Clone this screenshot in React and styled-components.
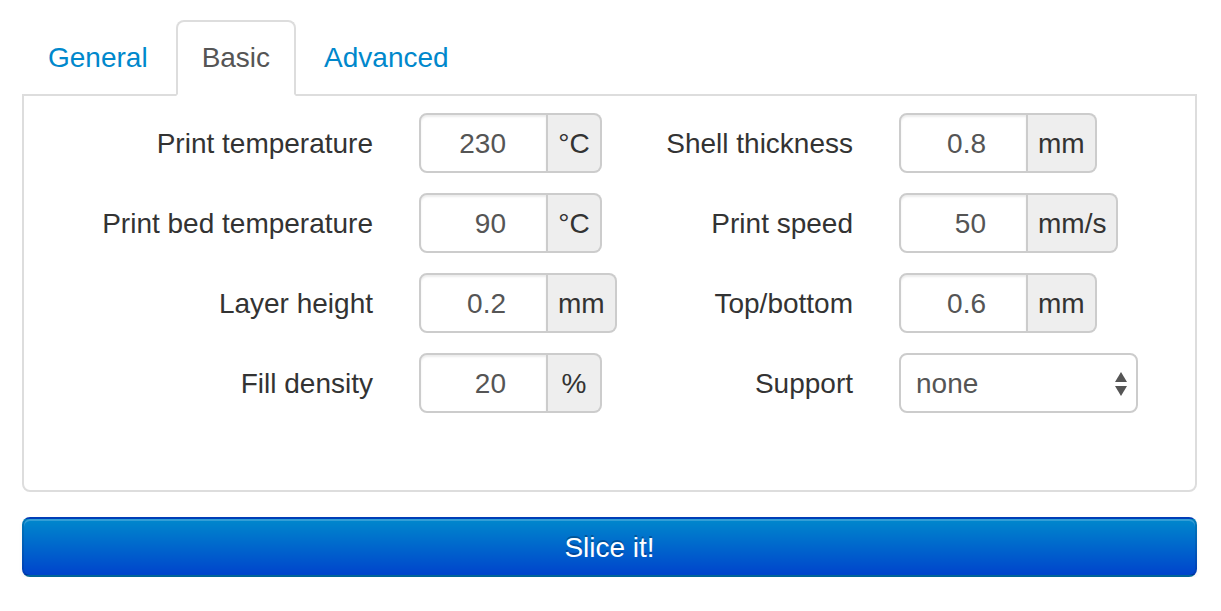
import React from 'react';
import styled, { createGlobalStyle } from 'styled-components';

const GlobalStyle = createGlobalStyle`
  html, body {
    margin: 0;
    padding: 0;
    background: #fff;
  }
  body {
    font-family: "Liberation Sans", Arial, Helvetica, sans-serif;
    font-size: 28px;
    line-height: 40px;
    color: #333;
  }
`;

const Page = styled.div`
  width: 1175px;
  padding: 20px 0 0 22px;
`;

const Tabs = styled.ul`
  display: flex;
  list-style: none;
  margin: 0;
  padding: 0;
  position: relative;
  z-index: 1;
`;

const Tab = styled.li`
  margin-right: 2px;
  margin-bottom: -2px;
  a {
    display: block;
    padding: 16px 24px;
    border: 2px solid ${(p) => (p.$active ? '#ddd' : 'transparent')};
    border-bottom-color: ${(p) => (p.$active ? '#fff' : 'transparent')};
    border-radius: 8px 8px 0 0;
    background: ${(p) => (p.$active ? '#fff' : 'transparent')};
    color: ${(p) => (p.$active ? '#555' : '#0088cc')};
    text-decoration: none;
    line-height: 40px;
  }
`;

const Panel = styled.div`
  border: 2px solid #ddd;
  border-radius: 0 0 8px 8px;
  padding: 17px 0 77px 29px;
`;

const Form = styled.div`
  display: grid;
  grid-template-columns: 480px 480px;
  row-gap: 20px;
`;

const Field = styled.div`
  display: flex;
  align-items: center;
  white-space: nowrap;
`;

const Label = styled.label`
  flex: 0 0 320px;
  text-align: right;
  color: #333;
  margin-right: 46px;
  padding-top: 2px;
`;

const Group = styled.div`
  display: flex;
  flex-shrink: 0;
  height: 60px;
`;

const NumberInput = styled.div`
  width: 85px;
  padding: 2px 40px 0 0;
  height: 54px;
  border: 2px solid #ccc;
  border-radius: 8px 0 0 8px;
  text-align: right;
  color: #555;
  line-height: 54px;
  box-shadow: inset 0 2px 2px rgba(0, 0, 0, 0.075);
`;

const Addon = styled.span`
  height: 54px;
  line-height: 54px;
  padding: 2px 10px 0;
  min-width: 32px;
  text-align: center;
  background: #eee;
  border: 2px solid #ccc;
  border-left: none;
  border-radius: 0 8px 8px 0;
  color: #333;
`;

const Select = styled.div`
  box-sizing: border-box;
  flex-shrink: 0;
  width: 239px;
  height: 60px;
  border: 2px solid #ccc;
  border-radius: 8px;
  display: flex;
  align-items: center;
  justify-content: space-between;
  padding: 2px 9px 0 15px;
  color: #555;
  background: #fff;
`;

const SliceButton = styled.button`
  display: block;
  width: 100%;
  height: 60px;
  margin-top: 25px;
  border: 2px solid #0055aa;
  border-color: rgba(0, 0, 0, 0.1) rgba(0, 0, 0, 0.1) rgba(0, 0, 0, 0.25);
  border-radius: 8px;
  background-color: #0074cc;
  background-image: linear-gradient(to bottom, #0088cc, #0044cc);
  box-shadow: inset 0 2px 0 rgba(255, 255, 255, 0.2), 0 2px 4px rgba(0, 0, 0, 0.05);
  color: #fff;
  font-family: "Liberation Sans", Arial, sans-serif;
  font-size: 28px;
  padding-top: 2px;
  text-shadow: 0 -2px 0 rgba(0, 0, 0, 0.25);
  cursor: pointer;
`;

const Arrows = () => (
  <svg width="12" height="24" viewBox="0 0 12 24">
    <polygon points="6,0 12,10 0,10" fill="#555" />
    <polygon points="0,14 12,14 6,24" fill="#555" />
  </svg>
);

const NumField = ({ label, value, unit }) => (
  <Field>
    <Label>{label}</Label>
    <Group>
      <NumberInput>{value}</NumberInput>
      <Addon>{unit}</Addon>
    </Group>
  </Field>
);

export default function App() {
  return (
    <Page>
      <GlobalStyle />
      <Tabs>
        <Tab><a href="#general">General</a></Tab>
        <Tab $active><a href="#basic">Basic</a></Tab>
        <Tab><a href="#advanced">Advanced</a></Tab>
      </Tabs>
      <Panel>
        <Form>
          <NumField label="Print temperature" value="230" unit="°C" />
          <NumField label="Shell thickness" value="0.8" unit="mm" />
          <NumField label="Print bed temperature" value="90" unit="°C" />
          <NumField label="Print speed" value="50" unit="mm/s" />
          <NumField label="Layer height" value="0.2" unit="mm" />
          <NumField label="Top/bottom" value="0.6" unit="mm" />
          <NumField label="Fill density" value="20" unit="%" />
          <Field>
            <Label>Support</Label>
            <Select>
              <span>none</span>
              <Arrows />
            </Select>
          </Field>
        </Form>
      </Panel>
      <SliceButton>Slice it!</SliceButton>
    </Page>
  );
}
